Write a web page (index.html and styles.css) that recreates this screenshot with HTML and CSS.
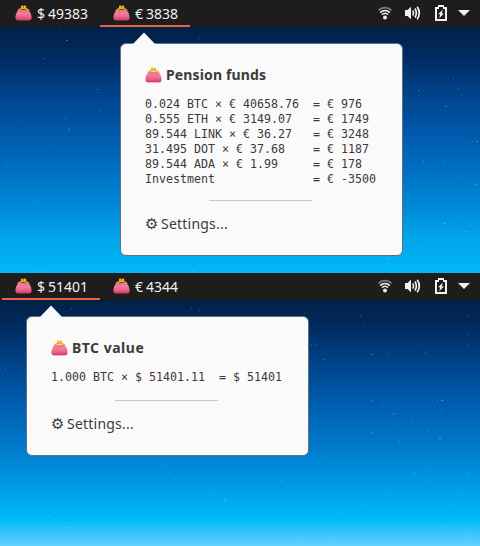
FILE: index.html
```html
<!DOCTYPE html>
<html lang="en">
<head>
<meta charset="utf-8">
<title>Wallet indicator</title>
<link rel="stylesheet" href="styles.css">
</head>
<body>
<svg class="defs" aria-hidden="true">
  <defs>
    <linearGradient id="pink" x1="0" y1="0" x2="0" y2="1">
      <stop offset="0" stop-color="#ee6f95"/><stop offset=".3" stop-color="#f2809f"/><stop offset=".7" stop-color="#ea5f87"/><stop offset="1" stop-color="#d94570"/>
    </linearGradient>
    <symbol id="purse" viewBox="0 0 17 16">
      <path d="M3 6.200C3.800 4.300 6 3.500 8.500 3.500S13.200 4.300 14 6.200" fill="none" stroke="#e8ad2c" stroke-width="1.500"/>
      <path d="M5 4.900H12C14.600 5.200 16.500 8.600 16.500 12.300 16.500 14.400 15.900 15.200 14.200 15.200H2.800C1.100 15.200.5 14.400.5 12.300.5 8.600 2.400 5.200 5 4.900z" fill="url(#pink)"/>
      <path d="M.7 13.300c3 .6 12.600.6 15.600 0-.2 1.400-.8 1.900-2.100 1.900H2.800c-1.300 0-1.900-.5-2.100-1.900z" fill="#d9446f"/>
      <path d="M6.500 6.800l.4 1.200M10.500 6.800l-.4 1.200" stroke="#dc5a82" stroke-width=".7"/>
      <circle cx="7.200" cy="2" r="1.400" fill="#efb51f"/><circle cx="9.900" cy="2" r="1.400" fill="#efb51f"/>
    </symbol>
    <symbol id="wifi" viewBox="0 0 16 16">
      <path d="M1.500 5.500C5 1.700 11 1.700 14.500 5.500" fill="none" stroke="#777" stroke-width="1.700"/>
      <path d="M3.200 7.600C6 4.900 10 4.900 12.800 7.600M5 9.700c1.800-1.700 4.200-1.700 6 0" fill="none" stroke="#f2f2f2" stroke-width="1.600"/>
      <circle cx="8" cy="12.600" r="2" fill="#f2f2f2"/>
    </symbol>
    <symbol id="volume" viewBox="0 0 16 16">
      <path d="M0 5h2.500L6 1.700v12.600L2.500 11H0z" fill="#f2f2f2"/>
      <path d="M7.800 5.300c1 1.700 1 3.700 0 5.400" fill="none" stroke="#f2f2f2" stroke-width="1.600"/>
      <path d="M10 3.500c1.700 2.800 1.700 6.200 0 9M12.200 1.800c2.500 3.700 2.500 8.700 0 12.400" fill="none" stroke="#f2f2f2" stroke-width="1.700"/>
    </symbol>
    <symbol id="battery" viewBox="0 0 12 16">
      <path d="M3 0h6v2h3v14H0V2h3zM2 4v10h8V4H8V2H4v2z" fill="#f2f2f2" fill-rule="evenodd"/>
      <path d="M7.800 4.700 3 9.300h2.200L4.200 13.200 9 8.600H6.800z" fill="#f2f2f2"/>
    </symbol>
  </defs>
</svg>

<section class="desktop desktop-first">
  <svg class="stars" viewBox="0 0 480 246" aria-hidden="true">
    <path d="M43.500 31.500h1M66 13.500h2M59 2h1M97 62.500h1.500M99.500 84h1M64.500 91h1M69 101.500h1M68 103h1M18 94h1M98 111h1M49.500 119h1M6.500 139h1M33 174.500h1M198.500 11h1M418 63.500h1.500M458 61.500h1M453 51.500h1M423.500 130h1M471.500 114.500h1M476 114.500h2M443 136.500h1M462.500 149h1M475 157.500h1.500M423 134h1M444 196.500h2M460 191h1M465.500 204.500h2M478 202h1M444 210h1M419 219h1M387 231.500h2M39.500 242.500h2M445 79h2M193 244h2"/>
  </svg>
  <header class="panel">
    <div class="item"><svg class="purse"><use href="#purse"/></svg><span class="money"><i>$</i>49383</span></div>
    <div class="item item-second active"><svg class="purse"><use href="#purse"/></svg><span class="money"><i>€</i>3838</span></div>
    <div class="tray">
      <svg class="wifi"><use href="#wifi"/></svg>
      <svg class="volume"><use href="#volume"/></svg>
      <svg class="battery"><use href="#battery"/></svg>
      <span class="caret"></span>
    </div>
  </header>
  <div class="popup popup-funds">
    <svg class="arrow" viewBox="0 0 26 13"><path d="M1 13 13 .5 25 13z" fill="#fafafa"/></svg>
    <h2 class="title"><svg class="purse"><use href="#purse"/></svg><span class="title-text">Pension funds</span></h2>
<pre class="rows">0.024 BTC × € 40658.76  = € 976
0.555 ETH × € 3149.07   = € 1749
89.544 LINK × € 36.27   = € 3248
31.495 DOT × € 37.68    = € 1187
89.544 ADA × € 1.99     = € 178
Investment              = € -3500</pre>
    <hr class="rule">
    <div class="settings"><span class="gear">⚙</span><span class="label">Settings...</span></div>
  </div>
</section>

<section class="desktop desktop-second">
  <svg class="stars" viewBox="0 0 480 246" aria-hidden="true">
    <path d="M71 9h1M190.500 8.500h1M199 10h1M360 15.500h1M363 25h1M311 45h1M316.500 44.500h1M324 59.500h1M371 54.500h2M388.500 54h1M420 44h1M425 53h1M468 15.500h1M468 34.500h1M468 46h1M354 96.500h1M371.500 101h2M382 105h1M393 114h2M411 120.500h1M393 126.500h1M437 100.500h1M441.500 100.500h2M441 110h1M358 129.500h1M371 133h2M399 141.500h1M439 139h2M428 131.500h1M323 157h1M302 175.500h1M426 169.500h1M412.500 173.500h2M412.500 186.500h1M431 181.500h1M443 179.500h1M468 173h1M468 176.500h1M390 194.500h1M457.500 190.500h1M453 206h1M361 205.500h1M340 213h1M444 227.500h1M468 228h1M468 237.500h1M333.500 239h1M161 166h1M175 179.500h1M194 178.500h1M228 186.500h1M212 191h1M224 200h2M280 180.500h1M186 203h1M48 215.500h1.500M67 227.500h2M205 224.500h1M250 222.500h1M298 238.500h1M5 69h1M18 122.500h1"/>
  </svg>
  <header class="panel">
    <div class="item active"><svg class="purse"><use href="#purse"/></svg><span class="money"><i>$</i>51401</span></div>
    <div class="item item-second"><svg class="purse"><use href="#purse"/></svg><span class="money"><i>€</i>4344</span></div>
    <div class="tray">
      <svg class="wifi"><use href="#wifi"/></svg>
      <svg class="volume"><use href="#volume"/></svg>
      <svg class="battery"><use href="#battery"/></svg>
      <span class="caret"></span>
    </div>
  </header>
  <div class="popup popup-btc">
    <svg class="arrow" viewBox="0 0 26 13"><path d="M1 13 13 .5 25 13z" fill="#fafafa"/></svg>
    <h2 class="title"><svg class="purse"><use href="#purse"/></svg><span class="title-text">BTC value</span></h2>
<pre class="rows">1.000 BTC × $ 51401.11  = $ 51401</pre>
    <hr class="rule">
    <div class="settings"><span class="gear">⚙</span><span class="label">Settings...</span></div>
  </div>
</section>
</body>
</html>
```
FILE: styles.css
```css
* { box-sizing: border-box; }
body {
  margin: 0;
  width: 480px;
  font-family: "Noto Sans", "Open Sans", sans-serif;
  color: #3b3b3b;
}
.defs { position: absolute; width: 0; height: 0; }

.desktop {
  position: relative;
  height: 273px;
  overflow: hidden;
}
.desktop-first {
  background: linear-gradient(#002047 27px, #002a5e 55px, #004085 90px, #0057a9 130px, #006fc2 170px, #0088d6 205px, #00a2e8 235px, #00b9f6 273px);
}
.desktop-second {
  background: linear-gradient(#002047 27px, #002c60 55px, #00438a 90px, #005cae 130px, #0077c9 170px, #0091dc 202px, #00a8eb 225px, #00b9f8 247px, #35c4fc 259px, #62d0ff 273px);
}
.stars {
  position: absolute;
  left: 0;
  top: 27px;
  width: 480px;
  height: 246px;
  fill: none;
  stroke: #9fd4e8;
  stroke-width: 1;
  opacity: .4;
}

.panel {
  display: flex;
  height: 27px;
  padding-left: 2px;
  background: #1d1d1d;
  color: #f2f2f2;
}
.item {
  display: flex;
  width: 98px;
  height: 27px;
  padding-left: 13px;
  border-bottom: 2px solid transparent;
}
.item-second { width: 90px; }
.active { border-bottom-color: #ee643a; }
.purse { width: 17px; height: 16px; flex: none; }
.panel .purse { margin-top: 5px; }
.money {
  margin-left: 5px;
  font-size: 14px;
  line-height: 27px;
  white-space: nowrap;
}
.money i { font-style: normal; margin-right: 3px; }

.tray { display: flex; margin-left: auto; }
.tray svg { flex: none; height: 16px; }
.wifi { width: 16px; margin: 5px 12px 0 0; }
.volume { width: 16px; margin: 5px 14px 0 0; }
.battery { width: 12px; margin: 5px 11px 0 0; }
.caret {
  width: 12px;
  height: 6px;
  margin: 10px 10px 0 0;
  background: #f2f2f2;
  clip-path: polygon(0 0, 100% 0, 50% 100%);
}

.popup {
  position: relative;
  width: 283px;
  margin-top: 16px;
  padding: 22px 26px 0 24px;
  border: 1px solid #5f7080;
  border-radius: 6px;
  background: #fafafa;
}
.popup-funds { height: 213px; margin-left: 120px; }
.popup-btc { height: 140px; margin-left: 26px; }
.arrow {
  position: absolute;
  left: 10.500px;
  top: -12px;
  width: 26px;
  height: 13px;
}
.popup-funds .arrow { left: 10px; }
.title {
  display: flex;
  height: 18px;
  margin: 0;
  font-size: 14px;
  line-height: 18px;
  letter-spacing: .15px;
}
.popup-btc .title { letter-spacing: .5px; }
.title .purse { margin-top: 1px; }
.title-text { margin-left: 4px; }
.rows {
  margin: 13px 0 0;
  font: 11.630px/15px "DejaVu Sans Mono", monospace;
}
.popup-btc .rows { padding-bottom: 2px; }
.rule {
  width: 103px;
  height: 1px;
  margin: 13px auto 0;
  border: 0;
  background: #c8c8c8;
}
.settings {
  display: flex;
  margin-top: 13px;
  font-size: 14px;
  line-height: 20px;
}
.label { letter-spacing: .22px; }
.gear { width: 16px; font-family: "DejaVu Sans", sans-serif; font-size: 15px; }
```
